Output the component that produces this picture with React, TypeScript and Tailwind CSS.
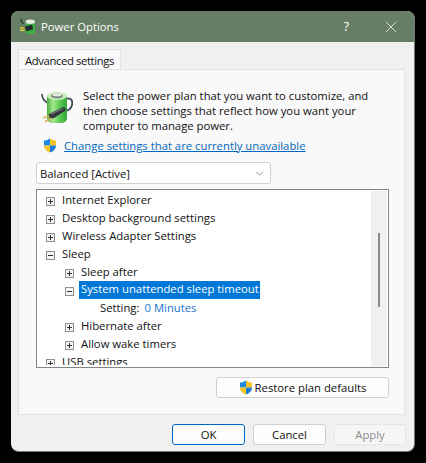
import { X, ChevronDown } from 'lucide-react'

const font = { fontFamily: '"Open Sans", "Noto Sans", sans-serif' }

function Shield({ className }: { className: string }) {
  return (
    <svg viewBox="0 0 16 18" className={className}>
      <path d="M8 0.5 C5.8 2 3.4 2.9 0.8 3 L0.8 9 L8 9 Z" fill="#1a8ae0" />
      <path d="M8 0.5 C10.2 2 12.6 2.9 15.2 3 L15.2 9 L8 9 Z" fill="#f7c325" />
      <path d="M0.8 9 L8 9 L8 17.5 C4 16 0.8 13 0.8 9 Z" fill="#f7c325" />
      <path d="M8 9 L15.2 9 C15.2 13 12 16 8 17.5 Z" fill="#1a7fd4" />
    </svg>
  )
}

function PowerIcon({ className }: { className: string }) {
  return (
    <svg viewBox="0 0 33 33" className={className}>
      <defs>
        <linearGradient id="cell" x1="0" y1="0" x2="1" y2="0">
          <stop offset="0" stopColor="#48ad43" />
          <stop offset="0.3" stopColor="#a6e890" />
          <stop offset="0.65" stopColor="#58c952" />
          <stop offset="1" stopColor="#35a53a" />
        </linearGradient>
      </defs>
      <path d="M2 3 C2 7 4 10 8 12" stroke="#3d4650" strokeWidth="1.6" fill="none" />
      <path d="M26 8 C31 6 33 10 32 14 C31 18 28 20 24 20" stroke="#3d4650" strokeWidth="1.8" fill="none" />
      <rect x="7" y="2" width="20" height="30" rx="5" fill="url(#cell)" />
      <ellipse cx="17" cy="5" rx="10" ry="4" fill="#c8ecbc" />
      <ellipse cx="17" cy="5" rx="6" ry="2.6" fill="#7f8b82" />
      <ellipse cx="17" cy="3.8" rx="4.5" ry="1.5" fill="#e6e9e4" />
      <path d="M9 23 L22 16.5 C25 15.5 27 18 25 20 L14 27 C11 28.5 8 26 9 23 Z" fill="#34393e" />
      <path d="M11 23 L23 17.5" stroke="#7b8187" strokeWidth="1.2" />
      <path d="M9 25 L3 27 M12 27.5 L5 30.5" stroke="#d8b15e" strokeWidth="1.6" />
    </svg>
  )
}

function PlugSmall({ className }: { className: string }) {
  return (
    <svg viewBox="0 0 16 16" className={className}>
      <path d="M1 0 C1 3 2 4 4 5" stroke="#23282c" strokeWidth="1.1" fill="none" />
      <rect x="6" y="2" width="10" height="14" rx="3" fill="#3cb043" />
      <ellipse cx="11" cy="3" rx="5" ry="2.4" fill="#e4efe0" />
      <path d="M5 8 L13 6 L14 11 L7 13 Z" fill="#23282c" />
      <path d="M5 9.5 L0 9.5 M5 12 L0 12" stroke="#e8d23a" strokeWidth="1.4" />
    </svg>
  )
}

function Expander({ open }: { open?: boolean }) {
  return (
    <span className="mt-[3px] flex h-[9px] w-[9px] shrink-0 items-center justify-center border border-[#8f8f8f] bg-[#f4f4f4]">
      <svg viewBox="0 0 7 7" className="h-[7px] w-[7px]">
        <path d="M1 3.5 H6" stroke="#333" strokeWidth="1" />
        {!open && <path d="M3.5 1 V6" stroke="#333" strokeWidth="1" />}
      </svg>
    </span>
  )
}

function Row({ label, open, child }: { label: string; open?: boolean; child?: boolean }) {
  return (
    <div className={`flex h-[18px] items-center ${child ? 'pl-[28px]' : 'pl-[9px]'}`}>
      <Expander open={open} />
      <span className="mb-[2px] ml-[7px] whitespace-nowrap">{label}</span>
    </div>
  )
}

function Button({ children, className }: { children: React.ReactNode; className: string }) {
  return (
    <div className={`flex h-[21px] items-center justify-center rounded-[3px] border ${className}`}>
      {children}
    </div>
  )
}

export default function App() {
  return (
    <div className="h-[463px] w-[426px] overflow-hidden bg-black pl-[11px] pt-[11px]" style={font}>
      <div className="flex h-[441px] w-[404px] flex-col overflow-hidden rounded-[8px] border-b border-r border-[#777] bg-[#f0f0f0] text-[11.3px] leading-[15px] text-[#111]">
        {/* Title bar */}
        <div className="flex h-[31px] shrink-0 items-center bg-[#667e66] pl-[9px] text-white">
          <PlugSmall className="h-[15px] w-[15px]" />
          <span className="ml-[6px]">Power Options</span>
          <span className="ml-auto text-[13px]">?</span>
          <X className="ml-[32px] mr-[13px] h-[20px] w-[20px]" strokeWidth={0.9} />
        </div>

        {/* Tab */}
        <div className="ml-[7px] mt-[7px] flex h-[21px] w-[103px] items-center justify-center whitespace-nowrap border border-b-0 border-[#e2e2e2] bg-[#f9f9f9] tracking-[-0.4px]">
          Advanced settings
        </div>

        {/* Panel */}
        <div className="-mt-px ml-[7px] flex h-[346px] w-[387px] flex-col border border-[#e2e2e2] bg-[#f9f9f9]">
          <div className="flex pl-[21px] pt-[21px]">
            <PowerIcon className="h-[33px] w-[33px] shrink-0" />
            <p className="-mt-[3px] ml-[10px] whitespace-nowrap">
              Select the power plan that you want to customize, and
              <br />
              then choose settings that reflect how you want your
              <br />
              computer to manage power.
            </p>
          </div>
          <div className="mt-[4px] flex h-[16px] items-center pl-[24px]">
            <Shield className="h-[15px] w-[14px]" />
            <span className="ml-[7px] text-[#0067c0] underline">Change settings that are currently unavailable</span>
          </div>
          <div className="ml-[17px] mt-[9px] flex h-[22px] w-[235px] items-center justify-between rounded-[3px] border border-[#d0d0d0] bg-white pl-[3px] pr-[4px]">
            <span>Balanced [Active]</span>
            <ChevronDown className="h-[13px] w-[13px] text-[#555]" strokeWidth={1.2} />
          </div>
          <div className="ml-[17px] mt-[5px] flex h-[179px] w-[353px] overflow-hidden border border-[#83878b] bg-white">
            <div className="h-full flex-1 overflow-hidden pt-[1px]">
              <Row label="Internet Explorer" />
              <Row label="Desktop background settings" />
              <Row label="Wireless Adapter Settings" />
              <Row label="Sleep" open />
              <Row label="Sleep after" child />
              <div className="flex h-[18px] items-center pl-[28px]">
                <Expander open />
                <span className="ml-[5px] h-[18px] whitespace-nowrap bg-[#0078d7] pl-[2px] pr-[1px] leading-[16px] text-white">
                  System unattended sleep timeout
                </span>
              </div>
              <div className="flex h-[18px] items-center pl-[63px]">
                <span className="mb-[2px]">Setting:</span>
                <span className="mb-[2px] ml-[5px] text-[#1a73c9]">0 Minutes</span>
              </div>
              <Row label="Hibernate after" child />
              <Row label="Allow wake timers" child />
              <div className="h-[12px] overflow-hidden">
                <Row label="USB settings" />
              </div>
            </div>
            <div className="my-[1px] mr-[1px] w-[16px] shrink-0 bg-[#f0f0f0] pl-[7px] pt-[42px]">
              <div className="h-[74px] w-[2px] bg-[#8a8a8a]" />
            </div>
          </div>
          <div className="flex justify-end pr-[15px] pt-[9px]">
            <Button className="w-[173px] border-[#d0d0d0] bg-[#fdfdfd]">
              <Shield className="h-[15px] w-[14px]" />
              <span className="ml-[2px]">Restore plan defaults</span>
            </Button>
          </div>
        </div>

        {/* Footer buttons */}
        <div className="flex gap-[8px] pl-[161px] pt-[9px]">
          <Button className="w-[73px] border-[#0067c0] bg-[#fdfdfd]">OK</Button>
          <Button className="w-[73px] border-[#d0d0d0] bg-[#fdfdfd]">Cancel</Button>
          <Button className="w-[72px] border-[#e5e5e5] bg-[#f6f6f6] text-[#8c8c8c]">Apply</Button>
        </div>
      </div>
    </div>
  )
}
